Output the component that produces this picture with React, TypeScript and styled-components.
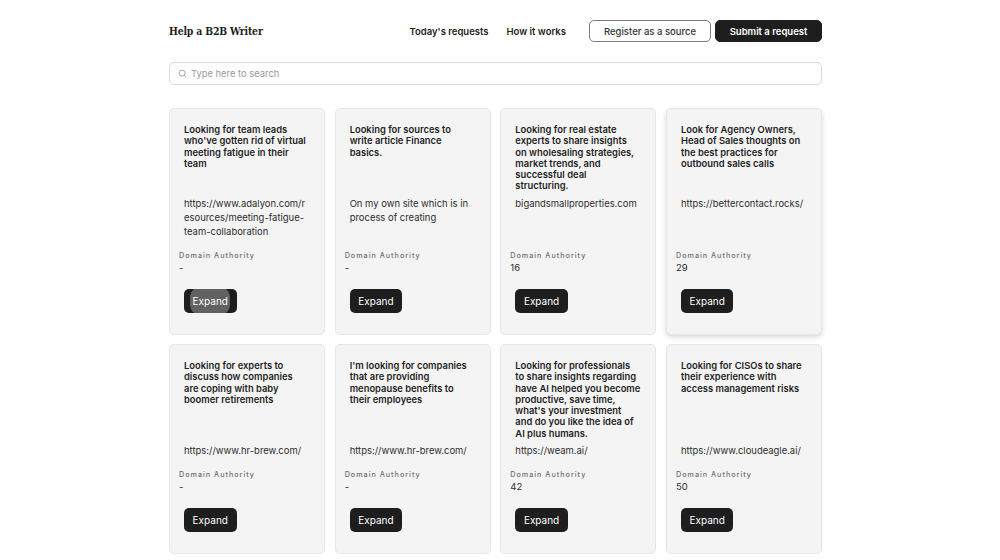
import React from "react";
import styled, { createGlobalStyle } from "styled-components";

const Global = createGlobalStyle`
  html, body { margin: 0; padding: 0; background: #fff; }
  body { font-family: Inter, "Liberation Sans", sans-serif; color: #1e1e1e; -webkit-font-smoothing: antialiased; }
  * { box-sizing: border-box; }
`;

const Page = styled.div`
  width: 653px;
  margin-left: 169px;
  padding-top: 20px;
`;

const Header = styled.header`
  display: flex;
  align-items: center;
  height: 22px;
`;

const Logo = styled.div`
  font-family: "DejaVu Serif", "Liberation Serif", serif;
  font-stretch: condensed;
  font-weight: 700;
  font-size: 10.4px;
  letter-spacing: -0.18px;
  color: #1e1e1e;
  margin-right: auto;
`;

const NavLink = styled.a`
  font-size: 9.5px;
  font-weight: 600;
  color: #1e1e1e;
  margin-right: 18px;
  white-space: nowrap;
`;

const HeaderButton = styled.button<{ $primary?: boolean }>`
  height: 22px;
  border-radius: 5px;
  font-family: inherit;
  font-size: 9.5px;
  padding: 0;
  white-space: nowrap;
  font-weight: ${(p) => (p.$primary ? 600 : 500)};
  width: ${(p) => (p.$primary ? "107px" : "122px")};
  margin-left: ${(p) => (p.$primary ? "4px" : "5px")};
  background: ${(p) => (p.$primary ? "#1e1e1e" : "#fff")};
  color: ${(p) => (p.$primary ? "#fff" : "#333")};
  border: 1px solid ${(p) => (p.$primary ? "#1e1e1e" : "#7d7d7d")};
`;

const SearchBar = styled.div`
  display: flex;
  align-items: center;
  gap: 4px;
  height: 23px;
  margin-top: 20px;
  padding-left: 8px;
  border: 1px solid #d9d9d9;
  border-radius: 5px;
  background: #fff;
`;

const SearchText = styled.span`
  font-size: 9.4px;
  color: #9a9a9a;
`;

const Grid = styled.main`
  display: grid;
  grid-template-columns: repeat(4, 156px);
  justify-content: space-between;
  row-gap: 9px;
  margin-top: 23px;
`;

const Card = styled.article<{ $raised?: boolean }>`
  grid-row: span 4;
  display: grid;
  grid-template-rows: subgrid;
  row-gap: 0;
  background: #f4f4f4;
  border: 1px solid #e6e6e6;
  border-radius: 5px;
  padding: 15px 9px 21px;
  box-shadow: ${(p) => (p.$raised ? "0 2px 5px rgba(0,0,0,.16)" : "none")};
`;

const Title = styled.h3`
  margin: 0 0 5px;
  padding: 0 5.6px 0 5px;
  min-height: 68px;
  font-size: 9.4px;
  line-height: 11.3px;
  font-weight: 600;
  color: #1e1e1e;
  white-space: pre-line;
`;

const Source = styled.div`
  padding: 0 7px 0 5px;
  font-size: 9.45px;
  line-height: 14px;
  color: #2c2c2c;
  overflow-wrap: anywhere;
`;

const Stat = styled.div`
  margin-top: 12px;
`;

const StatLabel = styled.div`
  font-size: 7.2px;
  line-height: 10px;
  font-weight: 500;
  letter-spacing: 1px;
  color: #6e6e6e;
`;

const StatValue = styled.div`
  font-size: 9.5px;
  line-height: 14px;
  color: #2c2c2c;
`;

const ExpandButton = styled.button`
  position: relative;
  overflow: hidden;
  justify-self: start;
  margin: 14px 0 0 5px;
  width: 52.5px;
  height: 24px;
  padding: 0;
  border: 0;
  border-radius: 5px;
  background: #1e1e1e;
  color: #fff;
  font-family: inherit;
  font-size: 10px;
  font-weight: 400;
`;

const Ripple = styled.span`
  position: absolute;
  top: -3px;
  bottom: -3px;
  left: 6px;
  right: 7px;
  border-radius: 12px;
  background: rgba(255, 255, 255, 0.3);
`;

const ExpandLabel = styled.span`
  position: relative;
`;

const SearchIcon = () => (
  <svg width="9" height="9" viewBox="0 0 24 24" fill="none" stroke="#8a8a8a" strokeWidth="2">
    <circle cx="11" cy="11" r="8" />
    <path d="m21 21-4.3-4.3" />
  </svg>
);

type Item = { title: string; source: string; da: string };

const items: Item[] = [
  { title: "Looking for team leads who've gotten rid of virtual meeting fatigue in their team", source: "https://www.adalyon.com/resources/meeting-fatigue-team-collaboration", da: "-" },
  { title: "Looking for sources to write article Finance basics.", source: "On my own site which is in process of creating", da: "-" },
  { title: "Looking for real estate experts to share insights\non wholesaling strategies, market trends, and successful deal structuring.", source: "bigandsmallproperties.com", da: "16" },
  { title: "Look for Agency Owners, Head of Sales thoughts on the best practices for outbound sales calls", source: "https://bettercontact.rocks/", da: "29" },
  { title: "Looking for experts to discuss how companies are coping with baby boomer retirements", source: "https://www.hr-brew.com/", da: "-" },
  { title: "I'm looking for companies that are providing menopause benefits to their employees", source: "https://www.hr-brew.com/", da: "-" },
  { title: "Looking for professionals to share insights regarding have AI helped you become productive, save time, what's your investment\nand do you like the idea of AI plus humans.", source: "https://weam.ai/", da: "42" },
  { title: "Looking for CISOs to share their experience with access management risks", source: "https://www.cloudeagle.ai/", da: "50" },
];

export default function App() {
  return (
    <Page>
      <Global />
      <Header>
        <Logo>Help a B2B Writer</Logo>
        <NavLink>Today's requests</NavLink>
        <NavLink>How it works</NavLink>
        <HeaderButton>Register as a source</HeaderButton>
        <HeaderButton $primary>Submit a request</HeaderButton>
      </Header>
      <SearchBar>
        <SearchIcon />
        <SearchText>Type here to search</SearchText>
      </SearchBar>
      <Grid>
        {items.map((item, i) => (
          <Card key={i} $raised={i === 3}>
            <Title>{item.title}</Title>
            <Source>{item.source}</Source>
            <Stat>
              <StatLabel>Domain Authority</StatLabel>
              <StatValue>{item.da}</StatValue>
            </Stat>
            <ExpandButton>
              {i === 0 && <Ripple />}
              <ExpandLabel>Expand</ExpandLabel>
            </ExpandButton>
          </Card>
        ))}
      </Grid>
    </Page>
  );
}
